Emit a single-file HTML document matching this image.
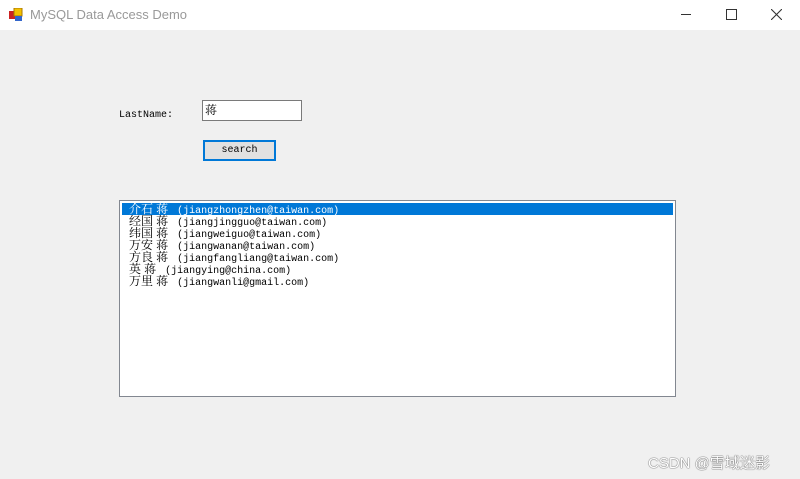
<!DOCTYPE html>
<html><head><style>
body{margin:0;width:800px;height:479px;background:#f0f0f0;position:relative;overflow:hidden;font-family:"Liberation Mono","Noto Serif CJK SC",monospace;}
.title{position:absolute;left:0;top:0;width:800px;height:30px;background:#fff;}
.t{position:absolute;left:30px;top:7px;font:13px "Liberation Sans",sans-serif;color:#999;}
.ab{position:absolute;font-size:10px;color:#000;}
.list{position:absolute;left:119px;top:200px;width:555px;height:195px;border:1px solid #828790;background:#fff;}
.row{position:absolute;left:2px;width:551px;height:12px;line-height:12px;font-size:10px;padding-left:7px;box-sizing:border-box;white-space:pre;}
.row b{font-weight:normal;font-size:12px;font-family:"Noto Serif CJK SC",serif;margin-right:3px;}
</style></head><body>
<div class="title">
<svg style="position:absolute;left:9px;top:8px" width="14" height="14"><rect x="0" y="3" width="6" height="8" fill="#c22"/><rect x="5" y="0" width="8" height="8" fill="#f3c000" stroke="#a70" stroke-width="1"/><rect x="6" y="8" width="7" height="5" fill="#36c"/></svg>
<div class="t">MySQL Data Access Demo</div>
<div style="position:absolute;left:681px;top:14px;width:10px;height:1px;background:#333"></div>
<div style="position:absolute;left:726px;top:9px;width:9px;height:9px;border:1px solid #333"></div>
<svg style="position:absolute;left:771px;top:9px" width="11" height="11"><path d="M0 0L11 11M11 0L0 11" stroke="#333" stroke-width="1.1"/></svg>
</div>
<div class="ab" style="left:119px;top:110px">LastName:</div>
<div style="position:absolute;left:202px;top:100px;background:#fff;border:1px solid #7a7a7a;font-size:12px;line-height:18px;padding-left:2px;box-sizing:border-box;width:100px;height:21px;font-family:'Noto Serif CJK SC',serif">蒋</div>
<div style="position:absolute;left:203px;top:140px;width:73px;height:21px;box-sizing:border-box;border:2px solid #0078d7;background:#e1e1e1;font-size:10px;text-align:center;line-height:17px">search</div>
<div class="list">
<div class="row" style="top:2px;background:#0078d7;color:#fff"><b>介石 蒋</b> (jiangzhongzhen@taiwan.com)</div>
<div class="row" style="top:14px"><b>经国 蒋</b> (jiangjingguo@taiwan.com)</div>
<div class="row" style="top:26px"><b>纬国 蒋</b> (jiangweiguo@taiwan.com)</div>
<div class="row" style="top:38px"><b>万安 蒋</b> (jiangwanan@taiwan.com)</div>
<div class="row" style="top:50px"><b>方良 蒋</b> (jiangfangliang@taiwan.com)</div>
<div class="row" style="top:62px"><b>英 蒋</b> (jiangying@china.com)</div>
<div class="row" style="top:74px"><b>万里 蒋</b> (jiangwanli@gmail.com)</div>
</div>
<div style="position:absolute;left:648px;top:452px;font:15px 'Liberation Sans','Noto Sans CJK SC',sans-serif;color:#fff;text-shadow:0 0 1px #555,0 0 1px #555">CSDN @雪域迷影</div>
</body></html>
